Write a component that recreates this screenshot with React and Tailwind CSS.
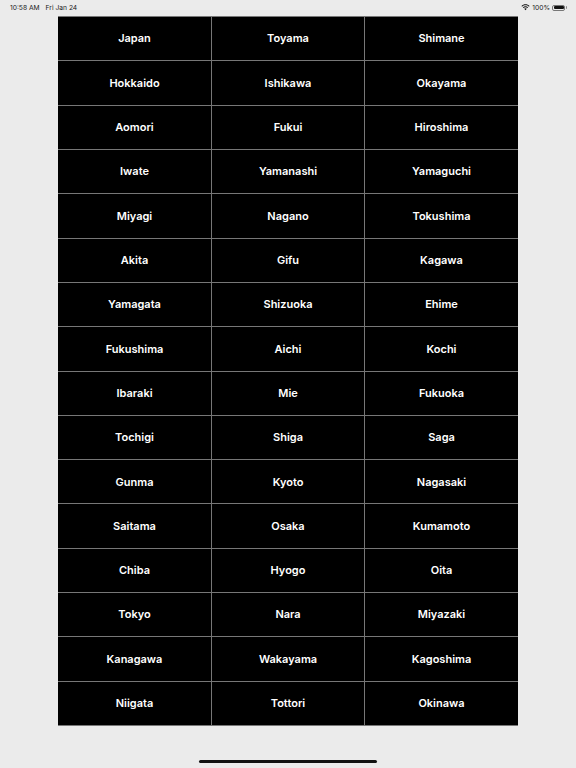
const names = [
    ["Japan", "Toyama", "Shimane"],
    ["Hokkaido", "Ishikawa", "Okayama"],
    ["Aomori", "Fukui", "Hiroshima"],
    ["Iwate", "Yamanashi", "Yamaguchi"],
    ["Miyagi", "Nagano", "Tokushima"],
    ["Akita", "Gifu", "Kagawa"],
    ["Yamagata", "Shizuoka", "Ehime"],
    ["Fukushima", "Aichi", "Kochi"],
    ["Ibaraki", "Mie", "Fukuoka"],
    ["Tochigi", "Shiga", "Saga"],
    ["Gunma", "Kyoto", "Nagasaki"],
    ["Saitama", "Osaka", "Kumamoto"],
    ["Chiba", "Hyogo", "Oita"],
    ["Tokyo", "Nara", "Miyazaki"],
    ["Kanagawa", "Wakayama", "Kagoshima"],
    ["Niigata", "Tottori", "Okinawa"],
];

const Wifi = () => (
    <svg width="9" height="7" viewBox="0 0 16 12" fill="#111">
        <path d="M8 2.2c2.3 0 4.4.9 6 2.4l1.2-1.3C13.300 1.400 10.800.3 8 .3S2.700 1.400.8 3.300L2 4.600c1.600-1.500 3.700-2.400 6-2.400z" />
        <path d="M8 5.700c1.300 0 2.500.5 3.500 1.400l1.200-1.300C11.400 4.600 9.800 3.900 8 3.900s-3.400.7-4.700 1.900l1.200 1.300c1-.9 2.200-1.400 3.500-1.400z" />
        <path d="M8 7.500c-.9 0-1.700.3-2.300.9L8 11l2.300-2.600c-.6-.6-1.400-.9-2.300-.9z" />
    </svg>
);

const Battery = () => (
    <div className="flex items-center gap-[1px]">
        <div className="w-[13px] h-[6px] rounded-[2px] border-[0.5px] border-[#777] p-[0.5px]">
            <div className="w-full h-full rounded-[1px] bg-[#111]"></div>
        </div>
        <div className="w-[1px] h-[3px] rounded-r-sm bg-[#888]"></div>
    </div>
);

const App = () => {
    return (
        <div className="w-[576px] h-[768px] overflow-hidden flex flex-col items-center bg-[#ebebeb] font-['Inter',sans-serif]">
            <div className="w-full h-[16px] shrink-0 flex items-start justify-between pl-[10px] pr-[9px] pt-[3.500px] text-[6.700px] leading-[8px] text-[#222]">
                <div className="flex gap-[6px]">
                    <span>10:58 AM</span>
                    <span>Fri Jan 24</span>
                </div>
                <div className="flex items-center gap-[2px]">
                    <Wifi />
                    <span>100%</span>
                    <Battery />
                </div>
            </div>

            <div className="w-[460px] h-[710px] shrink-0 grid grid-cols-[154px_153px_153px] grid-rows-16 bg-black border-t-[1px] border-[#777]">
                {names.flat().map((name, i) => (
                    <div
                        key={name}
                        className={
                            "flex items-center justify-center text-[11px] font-semibold text-white border-b-[1px] border-[#777] " +
                            (i % 3 !== 2 ? "border-r-[1px]" : "")
                        }
                    >
                        {name}
                    </div>
                ))}
            </div>

            <div className="w-[178px] h-[3px] mt-[34px] shrink-0 rounded-full bg-[#111]"></div>
        </div>
    );
};

export default App;
